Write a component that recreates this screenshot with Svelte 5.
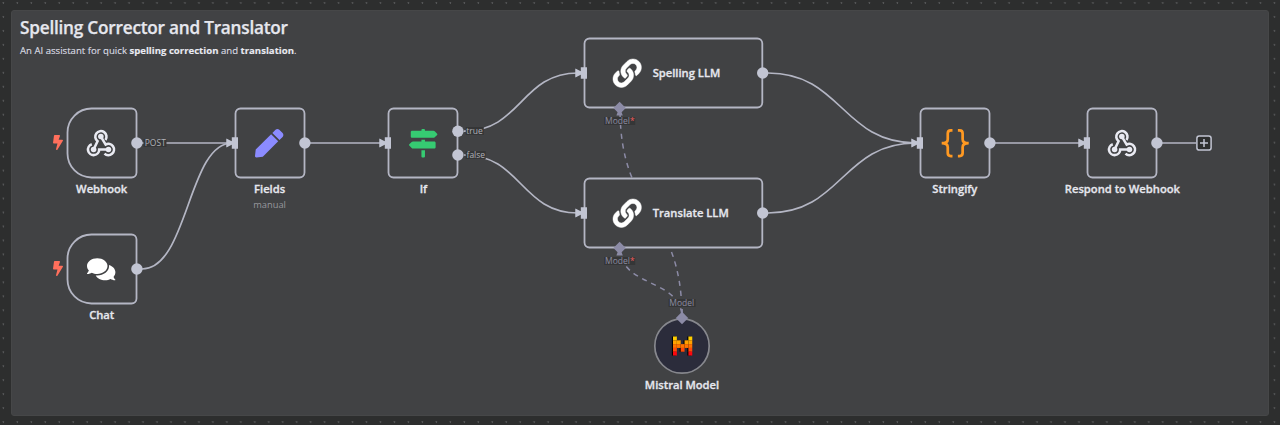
<script>
  const nodes = [
    { id: 'webhook', x: 66.7, y: 108, w: 70, label: 'Webhook', icon: 'webhook', trigger: true, outs: [35] },
    { id: 'chat', x: 66.7, y: 234, w: 70, label: 'Chat', icon: 'comments', trigger: true, outs: [35] },
    { id: 'fields', x: 234.6, y: 108, w: 70, label: 'Fields', sub: 'manual', icon: 'pen', input: true, outs: [35] },
    { id: 'if', x: 388.4, y: 108, w: 70, label: 'If', icon: 'signs', input: true, outs: [23.2, 47] },
    { id: 'spelling', x: 584.3, y: 38, w: 178.8, title: 'Spelling LLM', icon: 'link', input: true, outs: [35], model: true },
    { id: 'translate', x: 584.3, y: 178, w: 178.8, title: 'Translate LLM', icon: 'link', input: true, outs: [35], model: true },
    { id: 'stringify', x: 919.8, y: 108, w: 70, label: 'Stringify', icon: 'braces', input: true, outs: [35] },
    { id: 'respond', x: 1087.4, y: 108, w: 70, label: 'Respond to Webhook', icon: 'webhook', input: true, outs: [35] }
  ];

  const edges = [
    'M142 143H228',
    'M142 269C188 269 188 143 232 143',
    'M310 143H382',
    'M464 131.2C521 131.2 521 73 578 73',
    'M464 155C521 155 521 213 578 213',
    'M768 73C842 73 842 143 916 143',
    'M768 213C842 213 842 143 916 143',
    'M995 143H1082',
    'M1162 143H1196'
  ];

  const modelEdges = [
    { d: 'M620 108C620 218 682 208 682 318', offset: 4.5 },
    { d: 'M620 248C620 288 682 278 682 318', offset: 0 }
  ];

  const edgeLabels = [
    { text: 'POST', x: 155.3, y: 142.8 },
    { text: 'true', x: 474.6, y: 131.3 },
    { text: 'false', x: 475.8, y: 155.2 },
    { text: 'Model', x: 619.8, y: 121, required: true, dim: true },
    { text: 'Model', x: 619.8, y: 260.8, required: true, dim: true },
    { text: 'Model', x: 681.8, y: 303, dim: true }
  ];

  const mistral = [
    ['#ffcd00', [0, 4]],
    ['#ffa200', [0, 1, 3, 4]],
    ['#ff7300', [0, 1, 2, 3, 4]],
    ['#ff4a09', [0, 2, 4]],
    ['#fe060f', [0, 4]]
  ];

  const outline = (n) =>
    n.trigger
      ? 'M24.5 .5H64.5a5 5 0 0 1 5 5V64.5a5 5 0 0 1-5 5H24.5a24 24 0 0 1-24-24V24.5a24 24 0 0 1 24-24Z'
      : `M5.5 .5H${n.w - 5.5}a5 5 0 0 1 5 5V64.5a5 5 0 0 1-5 5H5.5a5 5 0 0 1-5-5V5.5a5 5 0 0 1 5-5Z`;
</script>

{#snippet icon(name)}
  {#if name === 'webhook'}
    <svg class="icon" viewBox="142 101 86 86">
      <g fill="none" stroke="#e9eaf2" stroke-width="7.8">
        <path d="M198 134A17 17 0 1 0 174 138L162 163" />
        <path d="M184 124L198.5 148.3A17 17 0 1 1 195 175.5" />
        <path d="M156.5 147A17 17 0 1 0 179 163H207" />
      </g>
      <g fill="#e9eaf2"><circle cx="184" cy="124" r="8.4" /><circle cx="162" cy="163" r="8.4" /><circle cx="207" cy="163" r="8.4" /></g>
    </svg>
  {:else if name === 'comments'}
    <svg class="icon" viewBox="0 0 576 512" fill="#fff"><path d="M416 192c0-88.4-93.1-160-208-160S0 103.6 0 192c0 34.3 14.1 65.9 38 92-13.4 30.2-35.5 54.2-35.8 54.5-2.2 2.3-2.8 5.7-1.5 8.7S4.8 352 8 352c36.6 0 66.9-12.3 88.7-25 32.2 15.7 70.3 25 111.3 25 114.9 0 208-71.6 208-160zm122 220c23.9-26 38-57.7 38-92 0-66.9-53.5-124.2-129.3-148.1.9 6.6 1.3 13.3 1.3 20.1 0 105.9-107.7 192-240 192-10.8 0-21.3-.8-31.7-1.9C207.8 439.6 281.8 480 368 480c41 0 79.1-9.2 111.3-25 21.8 12.7 52.1 25 88.7 25 3.2 0 6.1-1.9 7.3-4.8 1.3-2.9.7-6.3-1.5-8.7-.3-.3-22.4-24.2-35.8-54.5z" /></svg>
  {:else if name === 'pen'}
    <svg class="icon" viewBox="0 0 512 512" fill="#8b8bff"><path d="M290.74 93.24l128.02 128.02-277.99 277.99-114.14 12.6C11.35 513.54-1.56 500.62.14 485.34l12.7-114.22 277.9-277.88zm207.2-19.06l-60.11-60.11c-18.75-18.75-49.16-18.75-67.91 0l-56.55 56.55 128.02 128.02 56.55-56.55c18.75-18.76 18.75-49.16 0-67.91z" /></svg>
  {:else if name === 'signs'}
    <svg class="icon" viewBox="0 0 512 512" fill="#36cb72"><path d="M507.31 84.69L464 41.37c-6-6-14.14-9.37-22.63-9.37H288V16c0-8.84-7.16-16-16-16h-32c-8.84 0-16 7.16-16 16v16H56c-13.25 0-24 10.75-24 24v80c0 13.25 10.75 24 24 24h385.37c8.49 0 16.62-3.37 22.63-9.37l43.31-43.31c6.25-6.26 6.25-16.38 0-22.63zM224 496c0 8.84 7.16 16 16 16h32c8.84 0 16-7.16 16-16V384h-64v112zm232-272H288v-32h-64v32H70.63c-8.49 0-16.62 3.37-22.63 9.37L4.69 276.69c-6.25 6.25-6.25 16.38 0 22.63L48 342.63c6 6 14.14 9.37 22.63 9.37H456c13.25 0 24-10.75 24-24v-80c0-13.25-10.75-24-24-24z" /></svg>
  {:else if name === 'link'}
    <svg class="icon" viewBox="0 0 512 512" fill="#fff" stroke="#fff" stroke-width="8"><path d="M326.612 185.391c59.747 59.809 58.927 155.698.36 214.59-.11.12-.24.25-.36.37l-67.2 67.2c-59.27 59.27-155.699 59.262-214.96 0-59.27-59.26-59.27-155.7 0-214.96l37.106-37.106c9.84-9.84 26.786-3.3 27.294 10.606.648 17.722 3.826 35.527 9.69 52.721 1.986 5.822.567 12.262-3.783 16.612l-13.087 13.087c-28.026 28.026-28.905 73.66-1.155 101.96 28.024 28.579 74.086 28.749 102.325.51l67.2-67.19c28.191-28.191 28.073-73.757 0-101.83-3.701-3.694-7.429-6.564-10.341-8.569a16.037 16.037 0 0 1-6.947-12.606c-.396-10.567 3.348-21.456 11.698-29.806l21.054-21.055c5.521-5.521 14.182-6.199 20.584-1.731a152.482 152.482 0 0 1 20.522 17.197zM467.547 44.449c-59.261-59.262-155.69-59.27-214.96 0l-67.2 67.2c-.12.12-.25.25-.36.37-58.566 58.892-59.387 154.781.36 214.59a152.454 152.454 0 0 0 20.521 17.196c6.402 4.468 15.064 3.789 20.584-1.731l21.054-21.055c8.35-8.35 12.094-19.239 11.698-29.806a16.037 16.037 0 0 0-6.947-12.606c-2.912-2.005-6.64-4.875-10.341-8.569-28.073-28.073-28.191-73.639 0-101.83l67.2-67.19c28.239-28.239 74.3-28.069 102.325.51 27.75 28.3 26.872 73.934-1.155 101.96l-13.087 13.087c-4.35 4.35-5.769 10.79-3.783 16.612 5.864 17.194 9.042 34.999 9.69 52.721.509 13.906 17.454 20.446 27.294 10.606l37.106-37.106c59.271-59.259 59.271-155.699.001-214.959z" /></svg>
  {:else if name === 'braces'}
    <svg class="icon" viewBox="0 0 84 84" fill="none" stroke="#ff9922" stroke-width="8">
      <path d="M34 4H29Q20 4 20 13V30Q20 42 2 42Q20 42 20 54V71Q20 80 29 80H34M50 4H55Q64 4 64 13V30Q64 42 82 42Q64 42 64 54V71Q64 80 55 80H50" />
    </svg>
  {/if}
{/snippet}

<main class="canvas">
  <section class="sticky">
    <h1>Spelling Corrector and Translator</h1>
    <p>An AI assistant for quick <b>spelling correction</b> and <b>translation</b>.</p>
  </section>

  <svg class="edges" width="1280" height="425" viewBox="0 0 1280 425">
    {#each edges as d}<path {d} />{/each}
    {#each modelEdges as e}<path class="dashed" d={e.d} stroke-dashoffset={e.offset} />{/each}
    <path class="model" d="M682 318V309" />
  </svg>

  {#each nodes as n (n.id)}
    <div class="node" style="left:{n.x}px;top:{n.y}px;width:{n.w}px">
      <div class="body" class:wide={n.title}>
        <svg class="frame" width={n.w} height="70" viewBox="0 0 {n.w} 70">
          <path class="outline" d={outline(n)} />
          {#if n.input}
            <path class="port" d="M-3.2 29.2h6.2v11.6h-6.2zM-8.6 30.4l5.8 3v3.2l-5.8 3z" />
            <path class="port" d="M-8.4 31l5.4 4-5.4 4z" />
          {/if}
          {#each n.outs as y}<circle class="port" cx={n.w - 0.1} cy={y} r="5.7" />{/each}
          {#if n.model}<path class="diamond" d="M35.6 63.8l6.2 6.2-4.2 4.2 1.2 3.4h-6.4l1.2-3.4-4.2-4.2z" />{/if}
        </svg>
        {@render icon(n.icon)}
        {#if n.title}<span class="title">{n.title}</span>{/if}
      </div>
      {#if n.label}<span class="label">{n.label}</span>{/if}
      {#if n.sub}<span class="sub">{n.sub}</span>{/if}
      {#if n.trigger}
        <svg class="bolt" viewBox="0 0 320 512" preserveAspectRatio="none"><path fill="#ff6f5c" d="M296 160H180.6l42.6-129.8C227.2 15 215.7 0 200 0H56C44 0 33.8 8.9 32.2 20.8l-32 240C-1.7 275.2 9.5 288 24 288h118.7L96.6 482.5c-3.6 15.2 8 29.5 23.3 29.5 8.4 0 16.4-4.4 20.8-12l176-304c9.3-15.9-2.2-36-20.7-36z" /></svg>
      {/if}
    </div>
  {/each}

  <div class="node mistral">
    <svg width="56" height="56" viewBox="0 0 56 56">
      <circle cx="28" cy="28" r="27.2" fill="#2b2c3b" stroke="#87888e" stroke-width="1.7" />
      {#each mistral as [color, cols], row}
        {#each cols as col}<rect x={17.9 + col * 3.85} y={18.5 + row * 3.8} width="3.85" height="3.8" fill="#000" />{/each}
      {/each}
      {#each mistral as [color, cols], row}
        {#each cols as col}<rect x={19 + col * 3.85} y={18.5 + row * 3.8} width="3.85" height="3.85" fill={color} />{/each}
      {/each}
      <path class="diamond" d="M28 -6.2l6.2 6.2-6.2 6.2-6.2-6.2z" />
    </svg>
    <span class="label">Mistral Model</span>
  </div>

  {#each edgeLabels as l}
    <span class="edge-label" class:dim={l.dim} style="left:{l.x}px;top:{l.y}px">{l.text}{#if l.required}<i>*</i>{/if}</span>
  {/each}

  <svg class="add" width="16" height="16" viewBox="0 0 16 16">
    <rect x=".9" y=".9" width="14.2" height="14.2" rx="2.4" fill="#2d2e2e" stroke="#c2c5d3" stroke-width="1.5" />
    <path d="M8 4v8M4 8h8" stroke="#c2c5d3" stroke-width="1.5" />
  </svg>
</main>

<style>
  :global(body) { margin: 0; background: #2d2e2e; }
  .canvas {
    position: relative;
    width: 1280px;
    height: 425px;
    overflow: hidden;
    box-sizing: border-box;
    padding: 10px 11px 9px 10.5px;
    display: flex;
    background: radial-gradient(circle at 3.4px 2.8px, #555657 0.7px, transparent 1.2px) 0 0 / 13.98px 13.98px #2d2e2e;
    font-family: 'Open Sans', sans-serif;
    color: #e6e7ee;
  }
  .sticky {
    flex: 1;
    box-sizing: border-box;
    background: #414244;
    border: 1px solid #464748;
    border-radius: 3px;
    padding: 6px 8.5px;
  }
  h1 { margin: 0; font-size: 17.2px; line-height: 22px; font-weight: 600; letter-spacing: -0.22px; white-space: nowrap; -webkit-text-stroke: 0.25px; }
  p { margin: 4px 0 0; font-size: 9.6px; line-height: 16px; color: #dcdde3; white-space: nowrap; -webkit-text-stroke: 0.12px; }
  b { font-weight: 700; color: #e9eaf2; }
  .edges { position: absolute; left: 0; top: 0; fill: none; stroke: #b4b6c4; stroke-width: 1.7; }
  .dashed { stroke: #8c8ba6; stroke-width: 1.5; stroke-dasharray: 5.2 4.8; }
  .model { stroke: #8c8ba6; }
  .node { position: absolute; display: flex; flex-direction: column; align-items: center; }
  .body { position: relative; width: 100%; height: 70px; display: flex; align-items: center; justify-content: center; }
  .wide { box-sizing: border-box; justify-content: flex-start; padding-left: 29px; gap: 11px; }
  .frame { position: absolute; left: 0; top: 0; overflow: visible; }
  .outline { fill: #414244; stroke: #b4b6c4; stroke-width: 1.8; }
  .port { fill: #c2c5d3; }
  .diamond { fill: #8c8ba6; }
  .icon { position: relative; width: 28.4px; height: 28.4px; flex: none; overflow: visible; }
  .title, .label { position: relative; font-size: 11.2px; line-height: 16px; font-weight: 600; white-space: nowrap; -webkit-text-stroke: 0.3px; }
  .label { margin-top: 3px; }
  .sub { font-size: 9.3px; line-height: 14px; color: #96979d; margin-top: 1px; }
  .bolt { position: absolute; left: -14px; top: 27px; width: 10px; height: 15px; }
  .mistral { left: 654px; top: 317.6px; width: 56px; }
  .mistral svg { overflow: visible; }
  .edge-label {
    position: absolute;
    transform: translate(-50%, -50%);
    font-size: 8.5px;
    line-height: 8px;
    padding: 0 1px;
    background: #353637;
    color: #b0b1b8;
    white-space: nowrap;
  }
  .dim { color: #8c8ba0; }
  .edge-label i { font-style: normal; color: #f25c5c; }
  .add { position: absolute; left: 1195.5px; top: 135px; }
</style>
